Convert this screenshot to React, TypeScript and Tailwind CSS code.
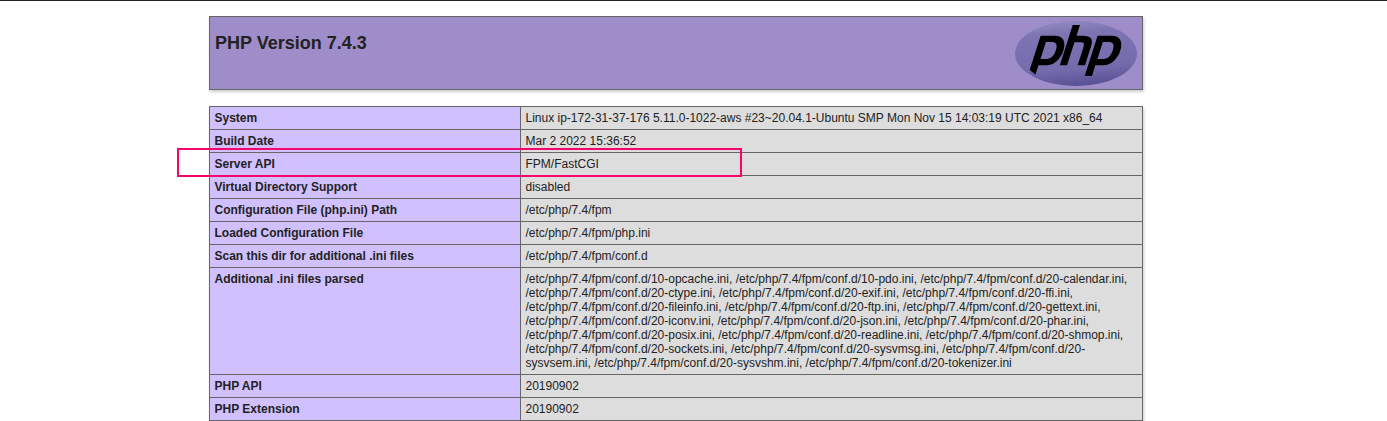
import { SiPhp } from 'react-icons/si';

const rows: [string, string][] = [
  ['System', 'Linux ip-172-31-37-176 5.11.0-1022-aws #23~20.04.1-Ubuntu SMP Mon Nov 15 14:03:19 UTC 2021 x86_64'],
  ['Build Date', 'Mar 2 2022 15:36:52'],
  ['Server API', 'FPM/FastCGI'],
  ['Virtual Directory Support', 'disabled'],
  ['Configuration File (php.ini) Path', '/etc/php/7.4/fpm'],
  ['Loaded Configuration File', '/etc/php/7.4/fpm/php.ini'],
  ['Scan this dir for additional .ini files', '/etc/php/7.4/fpm/conf.d'],
  [
    'Additional .ini files parsed',
    '/etc/php/7.4/fpm/conf.d/10-opcache.ini, /etc/php/7.4/fpm/conf.d/10-pdo.ini, /etc/php/7.4/fpm/conf.d/20-calendar.ini, /etc/php/7.4/fpm/conf.d/20-ctype.ini, /etc/php/7.4/fpm/conf.d/20-exif.ini, /etc/php/7.4/fpm/conf.d/20-ffi.ini, /etc/php/7.4/fpm/conf.d/20-fileinfo.ini, /etc/php/7.4/fpm/conf.d/20-ftp.ini, /etc/php/7.4/fpm/conf.d/20-gettext.ini, /etc/php/7.4/fpm/conf.d/20-iconv.ini, /etc/php/7.4/fpm/conf.d/20-json.ini, /etc/php/7.4/fpm/conf.d/20-phar.ini, /etc/php/7.4/fpm/conf.d/20-posix.ini, /etc/php/7.4/fpm/conf.d/20-readline.ini, /etc/php/7.4/fpm/conf.d/20-shmop.ini, /etc/php/7.4/fpm/conf.d/20-sockets.ini, /etc/php/7.4/fpm/conf.d/20-sysvmsg.ini, /etc/php/7.4/fpm/conf.d/20-sysvsem.ini, /etc/php/7.4/fpm/conf.d/20-sysvshm.ini, /etc/php/7.4/fpm/conf.d/20-tokenizer.ini',
  ],
  ['PHP API', '20190902'],
  ['PHP Extension', '20190902'],
];

function PhpLogo() {
  return (
    <div className="relative h-[65px] w-[122px] overflow-hidden rounded-[50%]">
      <svg viewBox="0 0 122 65" className="absolute inset-0 h-full w-full">
        <defs>
          <linearGradient id="php-oval" x1="0" y1="0" x2="0.15" y2="1">
            <stop offset="0" stopColor="#a49ccb" />
            <stop offset="0.3" stopColor="#7d75b2" />
            <stop offset="0.75" stopColor="#736bab" />
            <stop offset="1" stopColor="#544c92" />
          </linearGradient>
        </defs>
        <ellipse cx="61" cy="32.5" rx="60.5" ry="32" fill="url(#php-oval)" />
        <ellipse cx="61" cy="33" rx="54" ry="31" fill="#000" />
      </svg>
      <SiPhp
        fill="url(#php-oval)"
        className="absolute left-[-3px] top-[-44px] h-[153px] w-[127px] -skew-x-[9deg]"
        preserveAspectRatio="none"
      />
    </div>
  );
}

export default function App() {
  return (
    <div className="relative h-[421px] overflow-hidden bg-white font-['Liberation_Sans',Arial,sans-serif] text-[#222]">
      <div className="h-px bg-[#222]" />
      <div className="w-[1352px]">
        <div className="mx-auto mt-[15px] flex h-[74px] w-[934px] items-start justify-between border border-[#666] bg-[#9f8dc9] py-[4px] pr-[5px] pl-[5px] shadow-[1px_2px_3px_#ccc]">
          <h1 className="mt-[12px] text-[18px] leading-[20px] font-bold">PHP Version 7.4.3</h1>
          <PhpLogo />
        </div>
        <table className="mx-auto mt-[16px] w-[934px] table-fixed border-collapse text-[12px] leading-[normal] shadow-[1px_2px_3px_#ccc]">
          <tbody>
            {rows.map(([label, value]) => (
              <tr key={label}>
                <td className="w-[311px] border border-[#666] bg-[#d0c0fe] py-[4px] pr-[5px] pl-[4.5px] align-baseline font-bold">
                  {label}
                </td>
                <td className="border border-[#666] bg-[#dddddd] py-[4px] pr-[5px] pl-[4.5px] align-baseline break-words">
                  {value}
                </td>
              </tr>
            ))}
          </tbody>
        </table>
      </div>
      {/* highlight drawn over the Server API row */}
      <div className="absolute left-[177px] top-[148px] h-[29px] w-[565px] border-2 border-[#f5046a]" />
    </div>
  );
}
